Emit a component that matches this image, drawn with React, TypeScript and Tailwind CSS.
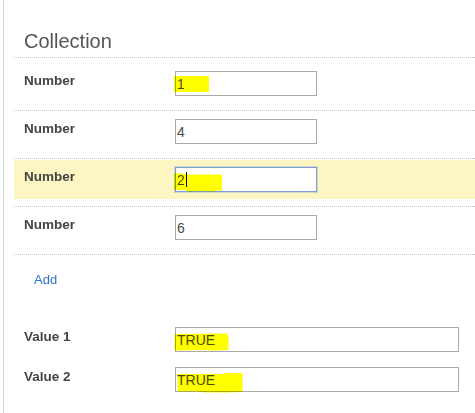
import React from "react";

const font = { fontFamily: '"Liberation Sans", Arial, sans-serif' };

function Mark({ points }: { points: string }) {
  return (
    <svg
      className="absolute left-0 top-0 pointer-events-none mix-blend-multiply"
      width="80"
      height="25"
      style={{ overflow: "visible" }}
    >
      <polygon points={points} fill="#ffff00" />
    </svg>
  );
}

function Field({
  value,
  wide,
  focused,
  mark,
  caret,
}: {
  value: string;
  wide?: boolean;
  focused?: boolean;
  mark?: string;
  caret?: boolean;
}) {
  return (
    <div
      className={
        "relative h-[25px] flex items-center pl-[1px] text-[14px] text-[#4a4a4a] bg-white border " +
        (wide ? "w-[284px] " : "w-[142px] ") +
        (focused
          ? "border-[#7d9fd6] shadow-[0_0_0_1px_rgba(125,159,214,0.35)]"
          : "border-[#a9a9a9]")
      }
    >
      <span className="leading-none">{value}</span>
      {caret && <span className="ml-[1px] w-[1px] h-[15px] bg-black" />}
      {mark && <Mark points={mark} />}
    </div>
  );
}

function NumberRow({
  value,
  first,
  highlight,
  focused,
  mark,
  caret,
}: {
  value: string;
  first?: boolean;
  highlight?: boolean;
  focused?: boolean;
  mark?: string;
  caret?: boolean;
}) {
  return (
    <div className="border-t border-dotted border-[#c4c4c4]">
      <div className={(first ? "pt-[6px]" : "pt-[1px]") + " pb-[7px]"}>
        <div
          className={
            "h-[39px] flex items-center pl-[10px] " +
            (highlight ? "bg-[#fdf6c3]" : "")
          }
        >
          <div className="w-[151px] mb-[4px] text-[13.5px] font-bold text-[#444]">
            Number
          </div>
          <Field value={value} focused={focused} mark={mark} caret={caret} />
        </div>
      </div>
    </div>
  );
}

function ValueRow({ label, mark }: { label: string; mark: string }) {
  return (
    <div className="flex items-center pl-[10px]">
      <div className="w-[151px] mb-[4px] text-[13.5px] font-bold text-[#444]">
        {label}
      </div>
      <Field value="TRUE" wide mark={mark} />
    </div>
  );
}

export default function App() {
  return (
    <div className="w-[475px] h-[413px] bg-white flex overflow-hidden" style={font}>
      <div className="w-[3px]" />
      <div className="w-[1px] bg-[#d2d2d2]" />
      <div className="w-[10px]" />
      <div className="flex-1 flex flex-col">
        <div className="pt-[30px] pb-[4px] pl-[10px]">
          <div className="text-[20px] leading-[23px] text-[#555]">Collection</div>
        </div>
        <NumberRow value="1" first mark="-2,4 33,4 33,20 -2,20" />
        <NumberRow value="4" />
        <NumberRow
          value="2"
          highlight
          focused
          caret
          mark="-2,5.5 10,5.5 10,6.5 46,6.5 46,22 36,23.5 24,23 12,23.5 10,22 -2,22"
        />
        <NumberRow value="6" />
        <div className="border-t border-dotted border-[#c4c4c4]">
          <div className="pt-[17px] pl-[20px] text-[13px] leading-[15px] text-[#2a72c8]">
            Add
          </div>
          <div className="mt-[40px] flex flex-col gap-[15px]">
            <ValueRow
              label="Value 1"
              mark="-1.5,6 51,5.5 52.5,8 52.5,22 34,22.5 31,22 -1.5,22.5"
            />
            <ValueRow
              label="Value 2"
              mark="1.5,6 47,6 48,5 66.5,5 66.5,24 48,24.5 30,24.5 20,23.5 1.5,23.5"
            />
          </div>
        </div>
      </div>
    </div>
  );
}
